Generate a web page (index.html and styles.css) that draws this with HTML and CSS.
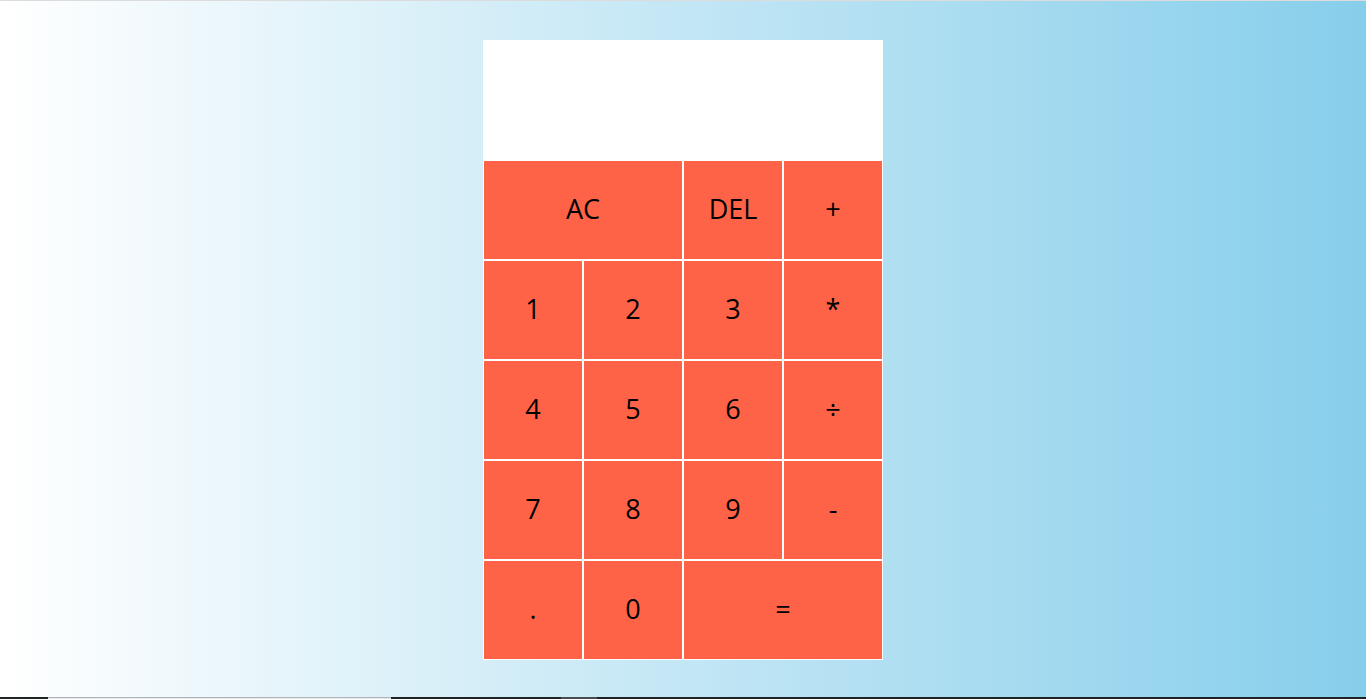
FILE: index.html
```html
<!DOCTYPE html>
<html>
<head>
<meta charset="utf-8">
<title>Calculator</title>
<link rel="stylesheet" href="styles.css">
</head>
<body>
<div class="calculator-grid">
  <div class="output">
    <div class="previous-operand"></div>
    <div class="current-operand"></div>
  </div>
  <button class="span-two">AC</button>
  <button>DEL</button>
  <button>+</button>
  <button>1</button>
  <button>2</button>
  <button>3</button>
  <button>*</button>
  <button>4</button>
  <button>5</button>
  <button>6</button>
  <button>÷</button>
  <button>7</button>
  <button>8</button>
  <button>9</button>
  <button>-</button>
  <button>.</button>
  <button>0</button>
  <button class="span-two">=</button>
</div>
<div class="taskbar">
  <span class="tb-a"></span>
  <span class="tb-b"></span>
  <span class="tb-c"></span>
  <span class="tb-d"></span>
  <span class="tb-e"></span>
</div>
</body>
</html>
```
FILE: styles.css
```css
*, *::before, *::after {
  box-sizing: border-box;
}

html, body {
  margin: 0;
  padding: 0;
}

body {
  min-height: 699px;
  height: 699px;
  overflow: hidden;
  background: linear-gradient(to right, #ffffff, #87ceeb);
  border-top: 1px solid #dcdcdc;
  font-family: "Open Sans", "Noto Sans", sans-serif;
}

.calculator-grid {
  display: grid;
  justify-content: center;
  align-content: start;
  padding-top: 39px;
  grid-template-columns: repeat(4, 100px);
  grid-template-rows: 120px repeat(5, 100px);
}

.calculator-grid > button {
  cursor: pointer;
  font-family: "Open Sans", "Noto Sans", sans-serif;
  font-size: 27px;
  color: #000;
  border: 1px solid #ffffff;
  outline: none;
  background-color: #ff6347;
  padding: 0 0 4px 0;
  margin: 0;
}

.span-two {
  grid-column: span 2;
}

.output {
  grid-column: 1 / -1;
  background-color: #ffffff;
  display: flex;
  align-items: flex-end;
  justify-content: space-around;
  flex-direction: column;
  padding: 10px;
  word-wrap: break-word;
  word-break: break-all;
}

.taskbar {
  position: fixed;
  left: 0;
  right: 0;
  bottom: 0;
  height: 2px;
  background: #1f2324;
  display: flex;
}

.tb-a { width: 48px; }
.tb-b { width: 343px; background: #e8e8ea; border-top: 1px solid #b0b4b8; }
.tb-c { width: 170px; }
.tb-d { width: 36px; background: #4a4d50; }
```
